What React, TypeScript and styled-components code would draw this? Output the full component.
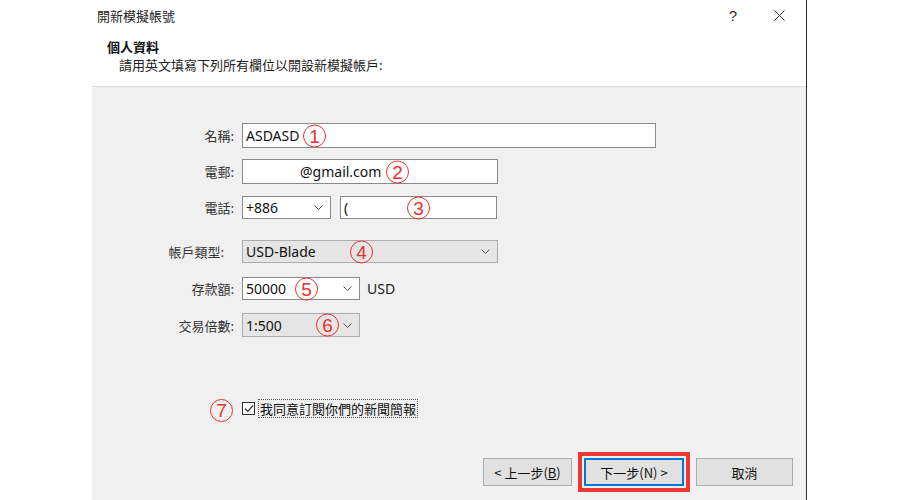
import React from 'react';
import styled, { createGlobalStyle } from 'styled-components';

const GlobalStyle = createGlobalStyle`
  html, body {
    margin: 0;
    padding: 0;
    background: #ffffff;
  }
  body {
    font-family: "Noto Sans", "Noto Sans CJK TC", sans-serif;
    color: #222;
  }
`;

const cjk = `"Noto Sans CJK TC", "Noto Sans", sans-serif`;
const latin = `"Noto Sans", "Noto Sans CJK TC", sans-serif`;

const Page = styled.div`
  width: 900px;
  height: 500px;
  overflow: hidden;
  padding-left: 92px;
  box-sizing: border-box;
`;

const Dialog = styled.div`
  width: 715px;
  height: 500px;
  box-sizing: border-box;
  border-right: 1px solid #2e2e2e;
  display: flex;
  flex-direction: column;
  background: #fff;
`;

const TitleBar = styled.div`
  height: 30px;
  display: flex;
  align-items: center;
  padding-left: 5px;
`;

const Title = styled.div`
  flex: 1;
  font-family: ${cjk};
  font-size: 13px;
  color: #222;
`;

const Control = styled.div<{ $w: number }>`
  width: ${(p) => p.$w}px;
  height: 30px;
  display: flex;
  align-items: center;
  justify-content: center;
  font-family: "Liberation Sans", sans-serif;
  font-size: 15px;
  color: #333;
`;

const Header = styled.div`
  height: 56px;
  box-sizing: border-box;
  padding: 8px 0 0 15px;
`;

const Heading = styled.div`
  font-family: ${cjk};
  font-weight: 700;
  font-size: 13px;
  line-height: 17px;
  color: #111;
`;

const Subtitle = styled.div`
  font-family: ${cjk};
  font-size: 13px;
  line-height: 19px;
  padding-left: 12px;
  color: #222;
`;

const Panel = styled.div`
  flex: 1;
  background: #f0f0f0;
  border-top: 1px solid #dcdcdc;
  padding-top: 36px;
  display: flex;
  flex-direction: column;
`;

const Row = styled.div<{ $gap?: number; $h: number }>`
  display: grid;
  grid-template-columns: 142px auto;
  column-gap: 8px;
  align-items: center;
  height: ${(p) => p.$h}px;
  margin-top: ${(p) => p.$gap ?? 0}px;
`;

const Label = styled.div<{ $shift?: number }>`
  font-family: ${cjk};
  font-size: 13px;
  color: #333;
  text-align: right;
  padding-right: ${(p) => p.$shift ?? 0}px;
  display: flex;
  justify-content: flex-end;
`;

const Fields = styled.div`
  display: flex;
  align-items: center;
  gap: 9px;
  height: 100%;
`;

const Field = styled.div<{ $w: number; $gray?: boolean }>`
  position: relative;
  width: ${(p) => p.$w}px;
  height: 100%;
  box-sizing: border-box;
  border: 1px solid ${(p) => (p.$gray ? '#adadad' : '#8a8a8a')};
  background: ${(p) => (p.$gray ? '#e5e5e5' : '#ffffff')};
  display: flex;
  align-items: center;
  padding-left: 3px;
  font-family: ${latin};
  font-size: 14px;
  color: #111;
`;

const Value = styled.span<{ $indent?: number }>`
  padding-left: ${(p) => p.$indent ?? 0}px;
  flex: 1;
  white-space: nowrap;
`;

const Chevron = styled.svg`
  width: 9px;
  height: 5px;
  margin-right: 7px;
  flex-shrink: 0;
`;

const Unit = styled.span`
  font-family: ${latin};
  font-size: 14px;
  color: #222;
  margin-left: -2px;
`;

const Mark = styled.span<{ $left?: number }>`
  position: ${(p) => (p.$left === undefined ? 'static' : 'absolute')};
  left: ${(p) => p.$left ?? 0}px;
  top: 50%;
  transform: ${(p) => (p.$left === undefined ? 'none' : 'translateY(-50%)')};
  width: 23px;
  height: 23px;
  box-sizing: border-box;
  border: 1.5px solid #e8322e;
  border-radius: 50%;
  display: inline-flex;
  align-items: center;
  justify-content: center;
  font-family: "Liberation Sans", sans-serif;
  font-size: 19px;
  line-height: 1;
  color: #e8322e;
`;

const CheckLine = styled.div`
  display: flex;
  align-items: center;
  gap: 3px;
  margin-top: -3px;
`;

const Box = styled.div`
  width: 13px;
  height: 13px;
  box-sizing: border-box;
  border: 1px solid #333;
  background: #fff;
  display: flex;
  align-items: center;
  justify-content: center;
`;

const CheckText = styled.span`
  font-family: ${cjk};
  font-size: 13px;
  color: #111;
  border: 1px dotted #555;
  padding: 0 1px;
  line-height: 17px;
`;

const Footer = styled.div`
  margin-top: auto;
  display: flex;
  justify-content: flex-end;
  gap: 10px;
  padding: 0 13px 14px 0;
`;

const Button = styled.button<{ $w: number; $primary?: boolean }>`
  width: ${(p) => p.$w}px;
  height: 28px;
  box-sizing: border-box;
  border: 1px solid ${(p) => (p.$primary ? '#0078d7' : '#adadad')};
  box-shadow: ${(p) => (p.$primary ? 'inset 0 0 0 1px #0078d7' : 'none')};
  outline: ${(p) => (p.$primary ? '4px solid #f03535' : 'none')};
  outline-offset: 2px;
  background: #e1e1e1;
  font-family: ${cjk};
  font-size: 13px;
  color: #111;
  padding: 0;
  margin: ${(p) => (p.$primary ? '0 2px' : '0')};
  white-space: pre;
`;

const Down = () => (
  <Chevron viewBox="0 0 9 5">
    <polyline points="0.5,0.5 4.5,4.5 8.5,0.5" fill="none" stroke="#555" strokeWidth="1" />
  </Chevron>
);

export default function App() {
  return (
    <Page>
      <GlobalStyle />
      <Dialog>
        <TitleBar>
          <Title>開新模擬帳號</Title>
          <Control $w={46}>?</Control>
          <Control $w={46}>
            <svg width="11" height="11" viewBox="0 0 11 11">
              <path d="M0.5 0.5 L10.5 10.5 M10.5 0.5 L0.5 10.5" stroke="#333" strokeWidth="1" />
            </svg>
          </Control>
          <Control $w={4} />
        </TitleBar>
        <Header>
          <Heading>個人資料</Heading>
          <Subtitle>請用英文填寫下列所有欄位以開設新模擬帳戶:</Subtitle>
        </Header>
        <Panel>
          <Row $h={25}>
            <Label>名稱:</Label>
            <Fields>
              <Field $w={414}>
                <Value>ASDASD</Value>
                <Mark $left={60}>1</Mark>
              </Field>
            </Fields>
          </Row>
          <Row $h={25} $gap={11}>
            <Label>電郵:</Label>
            <Fields>
              <Field $w={256}>
                <Value $indent={54}>@gmail.com</Value>
                <Mark $left={143}>2</Mark>
              </Field>
            </Fields>
          </Row>
          <Row $h={23} $gap={12}>
            <Label>電話:</Label>
            <Fields>
              <Field $w={89}>
                <Value>+886</Value>
                <Down />
              </Field>
              <Field $w={157}>
                <Value>(</Value>
                <Mark $left={66}>3</Mark>
              </Field>
            </Fields>
          </Row>
          <Row $h={23} $gap={21}>
            <Label $shift={10}>帳戶類型:</Label>
            <Fields>
              <Field $w={256} $gray>
                <Value>USD-Blade</Value>
                <Mark $left={107}>4</Mark>
                <Down />
              </Field>
            </Fields>
          </Row>
          <Row $h={23} $gap={14}>
            <Label>存款額:</Label>
            <Fields>
              <Field $w={118}>
                <Value>50000</Value>
                <Mark $left={52}>5</Mark>
                <Down />
              </Field>
              <Unit>USD</Unit>
            </Fields>
          </Row>
          <Row $h={24} $gap={13}>
            <Label>交易倍數:</Label>
            <Fields>
              <Field $w={118} $gray>
                <Value>1:500</Value>
                <Mark $left={73}>6</Mark>
                <Down />
              </Field>
            </Fields>
          </Row>
          <Row $h={24} $gap={61}>
            <Label $shift={1}>
              <Mark>7</Mark>
            </Label>
            <CheckLine>
              <Box>
                <svg width="10" height="9" viewBox="0 0 10 9">
                  <polyline points="1,4.5 3.8,7.3 9,1.5" fill="none" stroke="#333" strokeWidth="1.2" />
                </svg>
              </Box>
              <CheckText>我同意訂閱你們的新聞簡報</CheckText>
            </CheckLine>
          </Row>
          <Footer>
            <Button $w={89}>{'< 上一步('}<u>B</u>{')'}</Button>
            <Button $w={100} $primary>{'下一步(N) >'}</Button>
            <Button $w={97}>取消</Button>
          </Footer>
        </Panel>
      </Dialog>
    </Page>
  );
}
